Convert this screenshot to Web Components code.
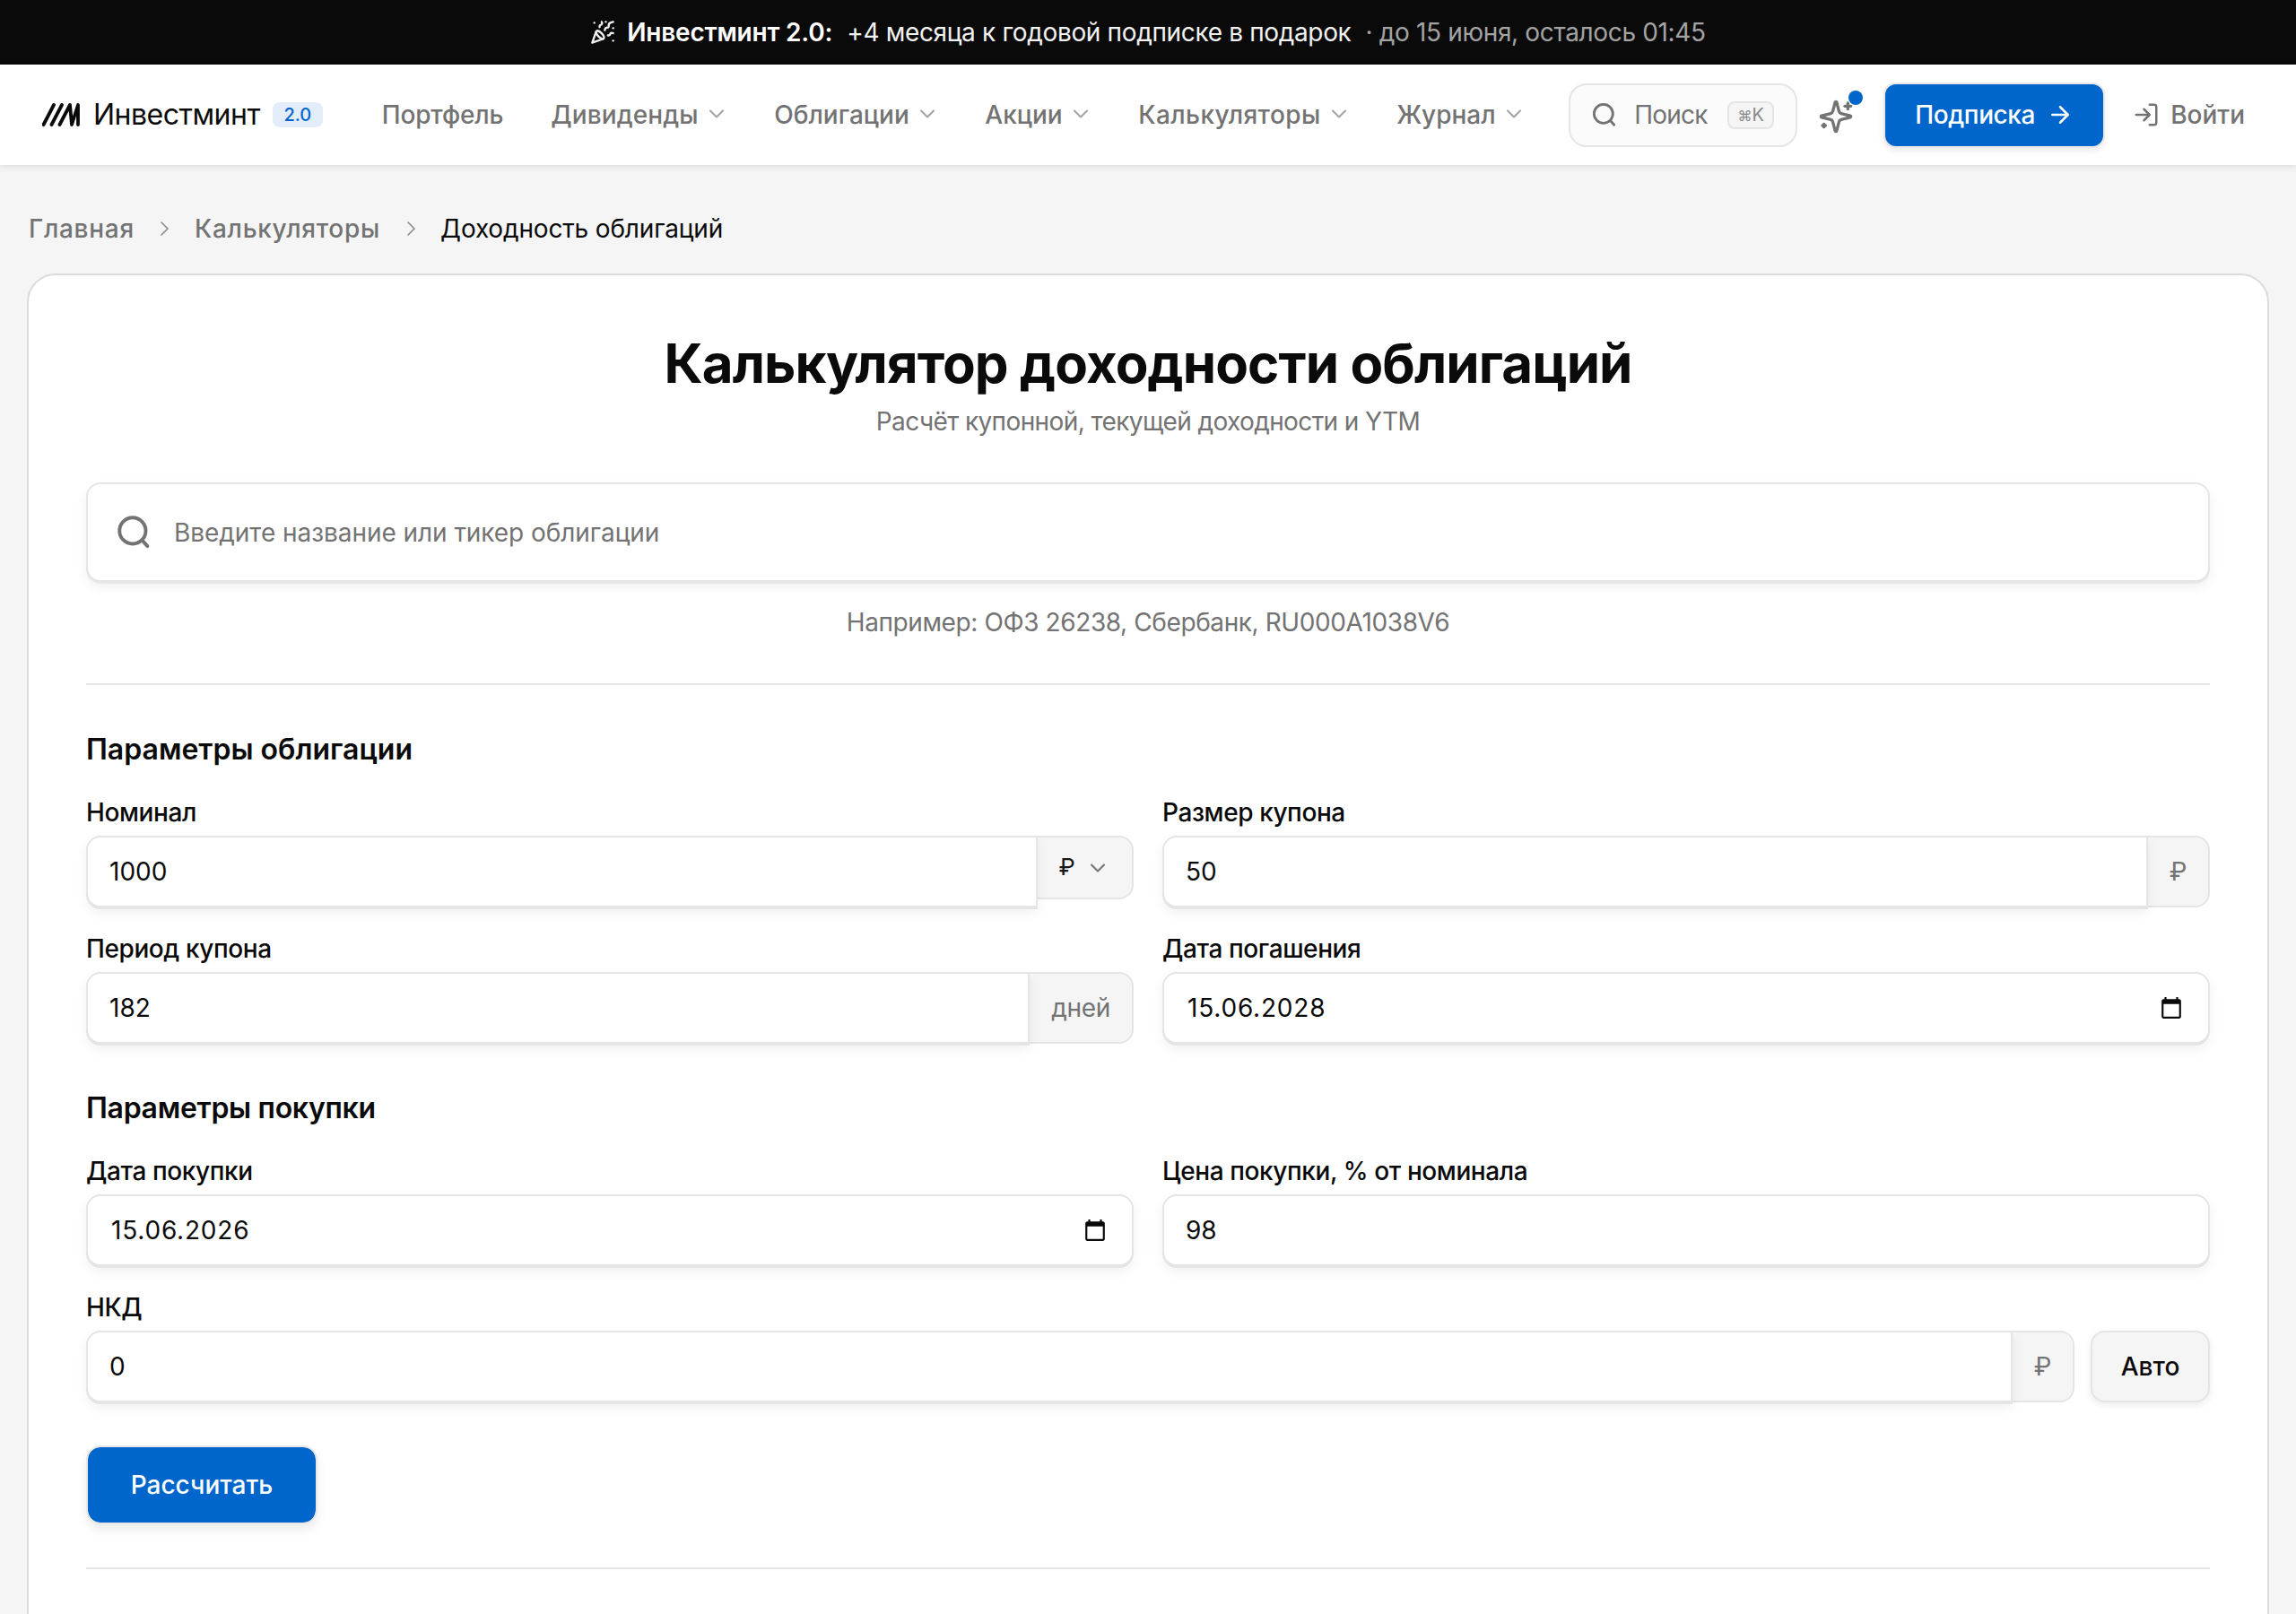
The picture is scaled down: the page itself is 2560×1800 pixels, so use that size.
<!DOCTYPE html>
<html lang="ru">
<head>
<meta charset="utf-8">
<title>Калькулятор доходности облигаций</title>
<style>
  html,body{margin:0;height:1800px;overflow:hidden}
  body{background:#f5f5f5;color:#0a0a0a;font-family:Inter,"Noto Sans",sans-serif;font-size:28px}
</style>
</head>
<body>
<im-promo></im-promo>
<im-header></im-header>
<im-crumbs></im-crumbs>
<im-card>
  <im-title title="Калькулятор доходности облигаций" sub="Расчёт купонной, текущей доходности и YTM"></im-title>
  <im-search placeholder="Введите название или тикер облигации" hint="Например: ОФЗ 26238, Сбербанк, RU000A1038V6"></im-search>
  <im-rule></im-rule>
  <im-section>Параметры облигации</im-section>
  <im-fields>
    <im-field label="Номинал"><im-input value="1000" kind="select" addon="₽"></im-input></im-field>
    <im-field label="Размер купона"><im-input value="50" addon="₽"></im-input></im-field>
    <im-field label="Период купона"><im-input value="182" addon="дней"></im-input></im-field>
    <im-field label="Дата погашения"><im-input value="15.06.2028" kind="date"></im-input></im-field>
  </im-fields>
  <im-section style="letter-spacing:-.3px">Параметры покупки</im-section>
  <im-fields last>
    <im-field label="Дата покупки"><im-input value="15.06.2026" kind="date"></im-input></im-field>
    <im-field label="Цена покупки, % от номинала"><im-input value="98"></im-input></im-field>
    <im-field label="НКД" wide><im-input value="0" addon="₽" action="Авто"></im-input></im-field>
  </im-fields>
  <im-submit>Рассчитать</im-submit>
  <im-rule></im-rule>
</im-card>

<script>
const ICON = (size, body, sw = 2) =>
  `<svg width="${size}" height="${size}" viewBox="0 0 24 24" fill="none" stroke="currentColor" stroke-width="${sw}" stroke-linecap="round" stroke-linejoin="round" style="display:block;flex:none">${body}</svg>`;
const CHEVRON = '<path d="m6 9 6 6 6-6"/>';
const SEARCH = '<circle cx="11" cy="11" r="9"/><path d="m17.6 17.6 3.6 4"/>';

class ImPromo extends HTMLElement {
  constructor() { super(); this.attachShadow({ mode: "open" }); }
  connectedCallback() {
    this.shadowRoot.innerHTML = `
      <style>
        :host{display:flex;align-items:center;justify-content:center;height:72px;background:#0a0a0a;color:#f2f2f2;font-size:28px;line-height:36px;letter-spacing:-.34px}
        svg{margin-right:13px}
        b{font-weight:600;color:#fff;margin-right:16px;letter-spacing:-.2px}
        .dim{color:#a3a3a3;margin-left:16px}
      </style>
      ${ICON(28, '<path d="M5.8 11.3 2 22l10.7-3.79"/><path d="M4 3h.01"/><path d="M22 8h.01"/><path d="M15 2h.01"/><path d="M22 20h.01"/><path d="m22 2-2.24.75a2.9 2.9 0 0 0-1.96 3.12c.1.86-.57 1.63-1.45 1.63h-.38c-.86 0-1.6.6-1.76 1.44L14 10"/><path d="m22 13-.82-.33c-.86-.34-1.82.2-1.98 1.11c-.11.7-.72 1.22-1.43 1.22H17"/><path d="m11 2 .33.82c.34.86-.2 1.82-1.11 1.98C9.52 4.9 9 5.52 9 6.23V7"/><path d="M11 13c1.93 1.93 2.83 4.17 2 5-.83.83-3.07-.07-5-2-1.93-1.93-2.83-4.17-2-5 .83-.83 3.07.07 5 2Z"/>')}
      <b>Инвестминт 2.0:</b><span>+4 месяца к годовой подписке в подарок</span><span class="dim">· до 15 июня, осталось 01:45</span>
    `;
  }
}
customElements.define("im-promo", ImPromo);

class ImNavItem extends HTMLElement {
  constructor() { super(); this.attachShadow({ mode: "open" }); }
  connectedCallback() {
    const arrow = this.hasAttribute("menu") ? ICON(28, CHEVRON, 1.8) : "";
    this.shadowRoot.innerHTML = `
      <style>
        :host{display:inline-flex;align-items:center;gap:6px;color:#737373;font-size:28px;font-weight:500;line-height:36px}
        svg{color:#a3a3a3;margin:-2px -2.4px 0 0}
      </style>
      <slot></slot>${arrow}
    `;
  }
}
customElements.define("im-nav-item", ImNavItem);

class ImHeader extends HTMLElement {
  constructor() { super(); this.attachShadow({ mode: "open" }); }
  connectedCallback() {
    this.shadowRoot.innerHTML = `
      <style>
        :host{display:flex;align-items:center;height:112px;box-sizing:border-box;padding:0 57px 0 47px;background:#fff;box-shadow:0 2px 8px rgba(0,0,0,.1);position:relative}
        .logo{display:flex;align-items:center;color:#0a0a0a;font-size:32px;font-weight:400;line-height:40px;letter-spacing:-.5px}
        .logo svg{margin-right:15px}
        .ver{margin-left:14px;height:28px;width:56px;border-radius:8px;background:#e3edf9;color:#0066cc;font-size:20px;font-weight:500;line-height:28px;letter-spacing:0;text-align:center}
        nav{display:flex;align-items:center;gap:53px;margin-left:66px}
        .search{display:flex;align-items:center;box-sizing:border-box;width:255px;height:71px;margin-left:auto;padding:0 24px 0 24px;border:2px solid #e5e5e5;border-radius:20px;background:#fbfbfb;color:#737373;font-weight:400}
        .search span{margin-left:19px;letter-spacing:-.8px}
        kbd{margin-left:auto;box-sizing:border-box;width:52px;height:31px;border:2px solid #e5e5e5;border-radius:8px;background:#f5f5f5;color:#8a8a8a;font:400 20px/27px Inter,"Noto Sans",sans-serif;text-align:center}
        kbd small{font-size:16px}
        .ai{position:relative;width:40px;height:40px;margin:4px 0 0 23px;color:#737373}
        .ai i{position:absolute;right:-10px;top:-9px;width:16px;height:16px;border-radius:50%;background:#0066cc}
        .sub{display:flex;align-items:center;justify-content:center;gap:13px;width:243px;height:69px;margin-left:35px;border-radius:12px;background:#0066cc;color:#fff;font-weight:500;letter-spacing:-.4px;box-shadow:0 0 0 2px #e8e8e8,0 4px 10px rgba(0,0,0,.1)}
        .login{display:flex;align-items:center;gap:12px;margin-left:33px;color:#737373;font-weight:500}
      </style>
      <div class="logo">
        <svg width="42" height="26" viewBox="0 0 42 26" fill="none" stroke="currentColor" stroke-width="3.8" stroke-linecap="round" stroke-linejoin="round"><path d="M1.5 24 13 2"/><path d="M10.5 24 22 2"/><path d="M19.5 24 31 2l2 22L40 2v22"/></svg>
        Инвестминт<span class="ver">2.0</span>
      </div>
      <nav>
        <im-nav-item style="letter-spacing:-.2px">Портфель</im-nav-item>
        <im-nav-item menu style="letter-spacing:.1px">Дивиденды</im-nav-item>
        <im-nav-item menu>Облигации</im-nav-item>
        <im-nav-item menu>Акции</im-nav-item>
        <im-nav-item menu style="letter-spacing:.4px">Калькуляторы</im-nav-item>
        <im-nav-item menu>Журнал</im-nav-item>
      </nav>
      <div class="search">${ICON(28, SEARCH, 2.4)}<span>Поиск</span><kbd><small>⌘</small>K</kbd></div>
      <div class="ai">${ICON(40, '<path d="M9.937 15.5A2 2 0 0 0 8.5 14.063l-6.135-1.582a.5.5 0 0 1 0-.962L8.5 9.936A2 2 0 0 0 9.937 8.5l1.582-6.135a.5.5 0 0 1 .963 0L14.063 8.5A2 2 0 0 0 15.5 9.937l6.135 1.581a.5.5 0 0 1 0 .964L15.5 14.063a2 2 0 0 0-1.437 1.437l-1.582 6.135a.5.5 0 0 1-.963 0z"/><path d="M20 3v4"/><path d="M22 5h-4"/><path d="M4 17v2"/><path d="M5 18H3"/>')}<i></i></div>
      <div class="sub">Подписка${ICON(30, '<path d="M5 12h14"/><path d="m12 5 7 7-7 7"/>')}</div>
      <div class="login">${ICON(30, '<path d="M15 3h4a2 2 0 0 1 2 2v14a2 2 0 0 1-2 2h-4"/><polyline points="10 17 15 12 10 7"/><line x1="15" y1="12" x2="3" y2="12"/>')}Войти</div>
    `;
  }
}
customElements.define("im-header", ImHeader);

class ImCrumbs extends HTMLElement {
  constructor() { super(); this.attachShadow({ mode: "open" }); }
  connectedCallback() {
    const sep = ICON(24, '<path d="m9 5 7 7-7 7"/>', 1.6);
    this.shadowRoot.innerHTML = `
      <style>
        :host{display:flex;align-items:center;gap:21.6px;height:36px;padding:53px 32px 32px;color:#737373;font-size:28px;font-weight:500;letter-spacing:.7px}
        svg{color:#8a8a8a}
        span:last-child{color:#0a0a0a;font-weight:400;letter-spacing:-.16px}
      </style>
      <span>Главная</span>${sep}<span>Калькуляторы</span>${sep}<span>Доходность облигаций</span>
    `;
  }
}
customElements.define("im-crumbs", ImCrumbs);

class ImCard extends HTMLElement {
  constructor() { super(); this.attachShadow({ mode: "open" }); }
  connectedCallback() {
    this.shadowRoot.innerHTML = `
      <style>
        :host{display:block;box-sizing:border-box;min-height:1700px;margin:0 30px;padding:62px 64px;background:#fff;border:2px solid #dcdcdc;border-radius:32px}
      </style>
      <slot></slot>
    `;
  }
}
customElements.define("im-card", ImCard);

class ImTitle extends HTMLElement {
  constructor() { super(); this.attachShadow({ mode: "open" }); }
  connectedCallback() {
    this.shadowRoot.innerHTML = `
      <style>
        :host{display:block;text-align:center}
        h1{margin:0;font-size:60px;font-weight:700;line-height:72px;letter-spacing:-.9px;color:#0a0a0a}
        p{margin:9px 0 0;font-size:28px;line-height:40px;letter-spacing:-.6px;color:#737373}
      </style>
      <h1>${this.getAttribute("title")}</h1>
      <p>${this.getAttribute("sub")}</p>
    `;
  }
}
customElements.define("im-title", ImTitle);

class ImSearch extends HTMLElement {
  constructor() { super(); this.attachShadow({ mode: "open" }); }
  connectedCallback() {
    this.shadowRoot.innerHTML = `
      <style>
        :host{display:block;margin-top:48px}
        .box{display:flex;align-items:center;box-sizing:border-box;height:111px;padding:0 32px;border:2px solid #e5e5e5;border-radius:16px;background:#fff;box-shadow:0 2px 0 #e8e8e8,0 6px 14px rgba(0,0,0,.06);color:#737373;font-size:28px}
        .box span{margin-left:25px;letter-spacing:-.05px}
        p{margin:25px 0 0;font-size:28px;line-height:40px;letter-spacing:-.4px;color:#737373;text-align:center}
      </style>
      <div class="box">${ICON(39, SEARCH, 2.4)}<span>${this.getAttribute("placeholder")}</span></div>
      <p>${this.getAttribute("hint")}</p>
    `;
  }
}
customElements.define("im-search", ImSearch);

class ImRule extends HTMLElement {
  constructor() { super(); this.attachShadow({ mode: "open" }); }
  connectedCallback() {
    this.shadowRoot.innerHTML = `<style>:host{display:block;height:2px;margin:48px 0 50px;background:#e5e5e5}</style>`;
  }
}
customElements.define("im-rule", ImRule);

class ImSection extends HTMLElement {
  constructor() { super(); this.attachShadow({ mode: "open" }); }
  connectedCallback() {
    this.shadowRoot.innerHTML = `
      <style>:host{display:block;margin-bottom:30px;font-size:32px;font-weight:600;line-height:44px;color:#0a0a0a}</style>
      <slot></slot>
    `;
  }
}
customElements.define("im-section", ImSection);

class ImFields extends HTMLElement {
  constructor() { super(); this.attachShadow({ mode: "open" }); }
  connectedCallback() {
    this.shadowRoot.innerHTML = `
      <style>
        :host{display:grid;grid-template-columns:1fr 1fr;gap:28px 32px;margin-bottom:50px}
        :host([last]){margin-bottom:48px}
      </style>
      <slot></slot>
    `;
  }
}
customElements.define("im-fields", ImFields);

class ImField extends HTMLElement {
  constructor() { super(); this.attachShadow({ mode: "open" }); }
  connectedCallback() {
    this.shadowRoot.innerHTML = `
      <style>
        :host{display:block}
        :host([wide]){grid-column:1 / -1}
        label{display:block;margin-bottom:8px;font-size:28px;font-weight:500;line-height:36px;letter-spacing:-.4px;color:#0a0a0a}
      </style>
      <label>${this.getAttribute("label")}</label>
      <slot></slot>
    `;
  }
}
customElements.define("im-field", ImField);

class ImInput extends HTMLElement {
  constructor() { super(); this.attachShadow({ mode: "open" }); }
  connectedCallback() {
    const kind = this.getAttribute("kind");
    const addon = this.getAttribute("addon");
    const action = this.getAttribute("action");
    const hasAddon = !!addon;
    let tail = "";
    if (kind === "select") {
      tail = `<div class="addon select"><span>${addon}</span>${ICON(28, CHEVRON, 1.8)}</div>`;
    } else if (hasAddon) {
      tail = `<div class="addon">${addon}</div>`;
    }
    const cal = kind === "date"
      ? `<svg class="cal" width="26" height="26" viewBox="0 0 24 24" fill="#0a0a0a"><path d="M20 3h-1V1h-2v2H7V1H5v2H4c-1.1 0-2 .9-2 2v16c0 1.1.9 2 2 2h16c1.1 0 2-.9 2-2V5c0-1.1-.9-2-2-2zm0 18H4V8h16v13z"/></svg>`
      : "";
    this.shadowRoot.innerHTML = `
      <style>
        :host{display:flex;align-items:flex-start;font-size:28px;line-height:36px}
        .field{flex:1;min-width:0;display:flex;align-items:center;justify-content:space-between;box-sizing:border-box;height:80px;padding:0 24px;border:2px solid #e5e5e5;border-radius:16px;background:#fff;box-shadow:0 2px 0 #e4e4e4,0 6px 14px rgba(0,0,0,.06);color:#0a0a0a;position:relative}
        .field.joined{border-radius:16px 0 0 16px;border-right-width:2px}
        .date{padding-left:26px;letter-spacing:.8px}
        .cal{margin-right:4px}
        .addon{display:flex;align-items:center;justify-content:center;box-sizing:border-box;height:80px;padding:0 24px;border:2px solid #e5e5e5;border-left:0;border-radius:0 16px 16px 0;background:#f5f5f5;color:#737373;letter-spacing:-.3px}
        .select{width:107px;height:71px;padding:0;gap:12px;color:#171717;font-size:26px}
        .select svg{color:#737373}
        .select span{margin-top:-2px}
        button{margin-left:18px;width:133px;height:80px;padding:0;border:2px solid #e5e5e5;border-radius:16px;background:#f5f5f5;color:#0a0a0a;font:500 28px/36px Inter,"Noto Sans",sans-serif;box-shadow:0 3px 8px rgba(0,0,0,.08)}
      </style>
      <div class="field ${hasAddon ? "joined" : ""} ${kind === "date" ? "date" : ""}"><span>${this.getAttribute("value")}</span>${cal}</div>${tail}${action ? `<button>${action}</button>` : ""}
    `;
  }
}
customElements.define("im-input", ImInput);

class ImSubmit extends HTMLElement {
  constructor() { super(); this.attachShadow({ mode: "open" }); }
  connectedCallback() {
    this.shadowRoot.innerHTML = `
      <style>
        :host{display:block}
        button{display:block;width:258px;height:88px;padding:0;border:2px solid #e8e8e8;border-radius:16px;background:#0066cc;background-clip:padding-box;color:#fff;font:500 28px/36px Inter,"Noto Sans",sans-serif;box-shadow:0 6px 12px rgba(0,0,0,.08)}
      </style>
      <button><slot></slot></button>
    `;
  }
}
customElements.define("im-submit", ImSubmit);
</script>
</body>
</html>
